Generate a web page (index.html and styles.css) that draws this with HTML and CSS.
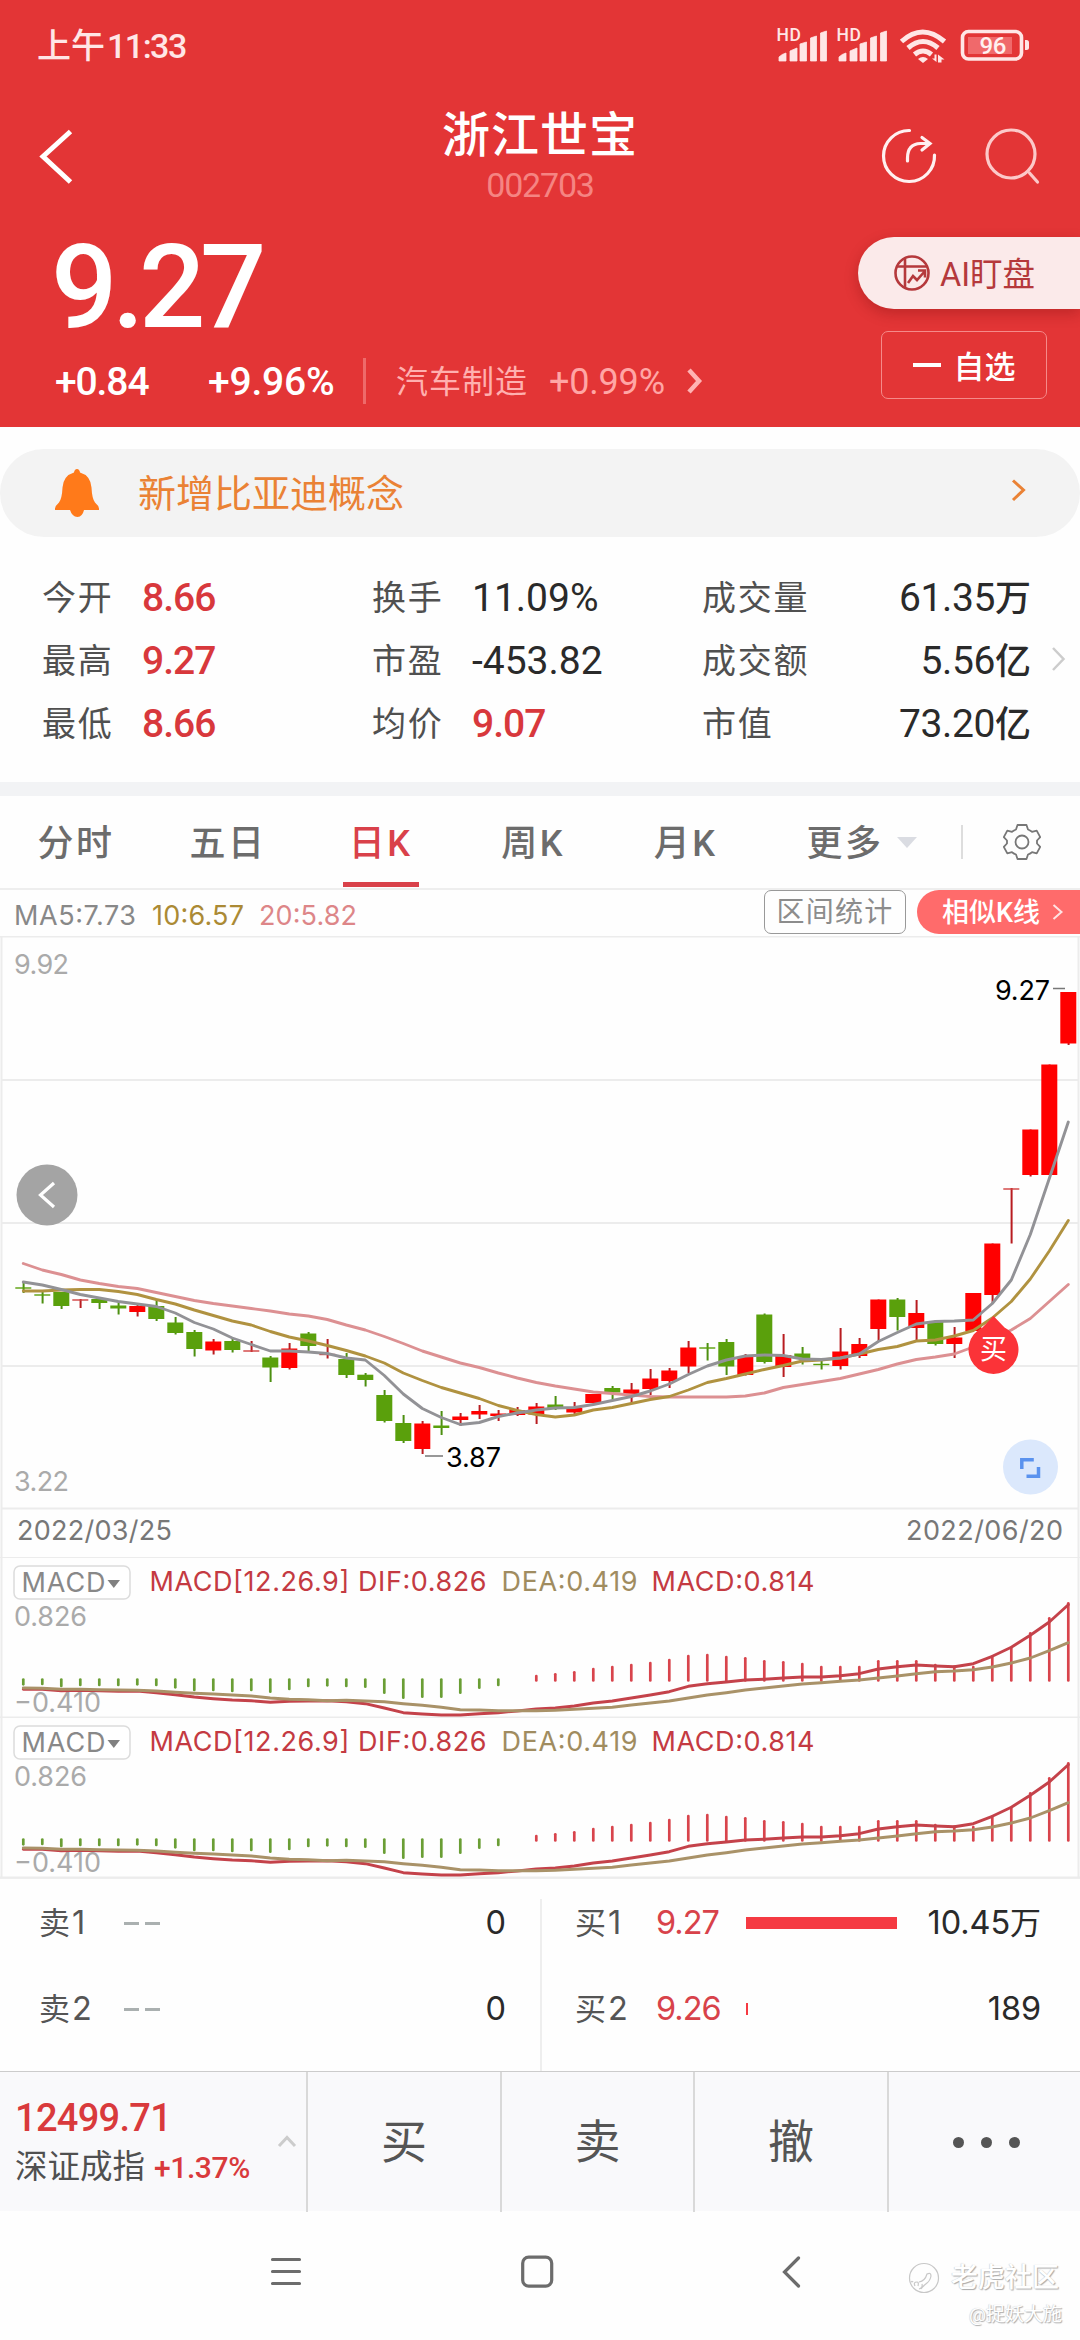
FILE: index.html
```html
<!DOCTYPE html>
<html lang="zh-CN">
<head>
<meta charset="utf-8">
<title>浙江世宝 002703</title>
<link rel="stylesheet" href="styles.css">
</head>
<body>
<header class="header">
  <div class="status">
    <span class="clock">上午<span class="clock-num">11:33</span></span>
    <svg class="status-icons" width="262" height="52" viewBox="770 20 262 52" fill="#ffe6e6">
      <g id="sim">
        <text x="776.500" y="41" class="hd" textLength="24.500">HD</text>
        <path d="M779 61v-4q3-3 7-4v8zM790 61V51l7-3v13zM800 61V44l6.500-2v19zM810.500 61V38l6-2v25zM820.500 61V33l6-2v30z" stroke="#ffe6e6" stroke-width=".8" stroke-linejoin="round"/>
      </g>
      <use href="#sim" x="60"/>
      <g fill="none" stroke="#ffe6e6" stroke-width="5">
        <path d="M901.500 41.500q21-19 43 0"/><path d="M908 48q15-13 30 0"/><path d="M914.500 54.500q8.500-7 17 0"/>
      </g>
      <path d="M918 59q5-4 10 0l-5 4z"/>
      <path d="M932 58.500h2.500v-4h2V62zM938 62.500V54.500l6.500 5h-3v3z"/>
      <rect x="962.500" y="31.500" width="59" height="27.500" rx="6" fill="none" stroke="#ffe6e6" stroke-width="3.600"/>
      <rect x="968" y="37" width="44" height="17" fill="#f0696b"/>
      <path d="M1025 40h1.500q2.500 0 2.500 2.500v5q0 2.500-2.500 2.500h-1.500z"/>
      <text x="979.500" y="54" class="batt" textLength="27">96</text>
    </svg>
  </div>
  <div class="titlebar">
    <svg class="back" width="60" height="60" viewBox="30 126 60 60" fill="none" stroke="#fff" stroke-width="5"><path d="M70.500 131.500 43 156.500l27.500 25.500"/></svg>
    <div class="title-box">
      <h1 class="title">浙江世宝</h1>
      <div class="code">002703</div>
    </div>
    <svg class="actions" width="170" height="60" viewBox="876 126 170 60" fill="none" stroke-width="3.200" stroke-linecap="round">
      <path stroke="#fff0f0" d="M909.500 130.500A25.500 25.500 0 1 0 934.500 155M907.500 161v-3q0-14 13-14.500h9M922 137.500l8 6-8 6.500"/>
      <g stroke="#fcc9c9"><circle cx="1011" cy="154" r="24"/><path d="M1029.500 173l8 9"/></g>
    </svg>
  </div>
  <div class="quote">
    <div class="quote-main">
      <div class="price">9.27</div>
      <div class="quote-row">
        <span class="chg">+0.84</span><span class="pct">+9.96%</span>
        <span class="sector">汽车制造</span><span class="sector-pct">+0.99%</span>
        <svg width="16" height="28" viewBox="0 0 16 28" fill="none" stroke="#ffb3b3" stroke-width="4.500"><path d="M2 3l10 11L2 25"/></svg>
      </div>
    </div>
    <div class="quote-side">
      <div class="ai-pill">
        <svg width="38" height="38" viewBox="892 254 38 38" fill="none" stroke="#b5393c" stroke-width="2.600"><circle cx="911" cy="273" r="16.500"/><path d="M895.500 266.500h31M904 258v30M907 283l5-7 4 4 8-9M917 270.500h7v7"/></svg>
        <span>AI盯盘</span>
      </div>
      <div class="watch"><i class="dash"></i><span>自选</span></div>
    </div>
  </div>
</header>

<section class="notice">
  <svg width="46" height="50" viewBox="54 467 46 50" fill="#ff7a1a"><path d="M77 468q2.500 0 3 3.500 10.500 3 11.500 15 .5 11 3.500 15 3.500 3 4 6v1.500H55V507.500q.5-3 4-6 3-4 3.500-15 1-12 11.500-15 .5-3.500 3-3.500z"/><path d="M70 509q2 6.500 7.500 7 5-.5 6.500-7z"/></svg>
  <span class="notice-text">新增比亚迪概念</span>
  <svg width="16" height="32" viewBox="1011 477 16 32" fill="none" stroke="#ea8235" stroke-width="3"><path d="M1013 480.500l10.500 9.500-10.500 10"/></svg>
</section>

<section class="stats">
  <dl class="stats-grid">
    <div><dt>今开</dt><dd class="up">8.66</dd></div><div><dt>换手</dt><dd>11.09%</dd></div><div class="wide"><dt>成交量</dt><dd>61.35<b>万</b></dd></div>
    <div><dt>最高</dt><dd class="up">9.27</dd></div><div><dt>市盈</dt><dd>-453.82</dd></div><div class="wide"><dt>成交额</dt><dd>5.56<b>亿</b></dd></div>
    <div><dt>最低</dt><dd class="up">8.66</dd></div><div><dt>均价</dt><dd class="up">9.07</dd></div><div class="wide"><dt>市值</dt><dd>73.20<b>亿</b></dd></div>
  </dl>
  <svg width="16" height="28" viewBox="0 0 16 28" fill="none" stroke="#ccc" stroke-width="2.500"><path d="M2 3l10.500 11L2 25"/></svg>
</section>

<nav class="tabs">
  <span>分时</span><span>五日</span><span class="active">日K</span><span>周K</span><span>月K</span>
  <span class="more">更多<i class="tri"></i></span>
  <span class="gear"><svg width="38" height="38" viewBox="-19 -19 38 38" fill="none" stroke="#777" stroke-width="1.800" stroke-linejoin="round"><path d="M-4.500-17h9l1.500 4.500q2 .8 4 2.300l4.700-1.200 3.500 6.500L15-1.500v3l3.200 3.400-3.500 6.500-4.700-1.200q-2 1.500-4 2.300L4.500 17h-9L-6 12.500q-2-.8-4-2.300l-4.700 1.200-3.500-6.500L-15 1.500v-3l-3.200-3.400 3.500-6.500 4.700 1.200q2-1.500 4-2.300z"/><circle r="6.500"/></svg></span>
</nav>

<div class="legend">
  <svg width="400" height="46" viewBox="0 890 400 46" class="ctext">
    <text x="14" y="924.500" fill="#888" textLength="122">MA5:7.73</text>
    <text x="152" y="924.500" fill="#ab8a35" textLength="92">10:6.57</text>
    <text x="259" y="924.500" fill="#dd8688" textLength="98">20:5.82</text>
  </svg>
  <span class="range">区间统计</span>
  <span class="similar"><span>相似K线</span><svg width="12" height="20" viewBox="0 0 12 20" fill="none" stroke="#ffe3e3" stroke-width="2"><path d="M1.500 3l8 7-8 7"/></svg></span>
</div>

<svg class="ctext" id="kline" width="1080" height="622" viewBox="0 936 1080 622">
  <path class="rule" d="M0 936.500H1080M2 1080H1078M2 1223H1078M2 1366H1078M2 1508.500H1078M0 1558H1080M1.500 936V1558M1078.500 936V1558"/>
  <text x="14" y="974" fill="#aaa" textLength="55">9.92</text>
  <text x="14" y="1491" fill="#aaa" textLength="55">3.22</text>
  <g id="candles"></g>
  <g id="averages"></g>
  <path d="M425 1456h18M1053 988.500h12" stroke="#777" stroke-width="1.600"/>
  <text x="446" y="1467" fill="#000" textLength="55">3.87</text>
  <text x="995" y="1000" fill="#000" textLength="55">9.27</text>
  <circle cx="47" cy="1195" r="30.500" fill="#a4a4a4"/>
  <path d="M54 1183l-13.500 12 13.500 12" fill="none" stroke="#fff" stroke-width="3.200"/>
  <circle cx="1030.500" cy="1467" r="27.500" fill="#dbe8fc"/>
  <path d="M1021.800 1469v-9.300h12M1026.500 1476.300h12v-9.300" fill="none" stroke="#5a92ee" stroke-width="3.500"/>
  <path d="M993.500 1316l11 11.500a25 24.500 0 1 1-22 0z" fill="#fb3338"/>
  <text x="993.500" y="1358.500" class="mark">买</text>
  <text x="17" y="1540" fill="#777" textLength="155">2022/03/25</text>
  <text x="906" y="1540" fill="#777" textLength="157">2022/06/20</text>
</svg>

<svg class="ctext macd" width="1080" height="160" viewBox="0 1558 1080 160"></svg>
<svg class="ctext macd" width="1080" height="160" viewBox="0 1558 1080 160"></svg>

<section class="book">
  <div class="book-col">
    <div class="book-row"><span class="lv">卖<em>1</em></span><i class="dd"></i><i class="dd"></i><span class="vol">0</span></div>
    <div class="book-row"><span class="lv">卖<em>2</em></span><i class="dd"></i><i class="dd"></i><span class="vol">0</span></div>
  </div>
  <div class="book-col buy">
    <div class="book-row"><span class="lv">买<em>1</em></span><span class="bp">9.27</span><i class="bar" style="width:151px"></i><span class="vol">10.45<b>万</b></span></div>
    <div class="book-row"><span class="lv">买<em>2</em></span><span class="bp">9.26</span><i class="bar" style="width:2px"></i><span class="vol">189</span></div>
  </div>
</section>

<footer class="toolbar">
  <div class="index">
    <div>
      <div class="idx-val">12499.71</div>
      <div class="idx-row"><span>深证成指</span><span class="idx-pct">+1.37%</span></div>
    </div>
    <svg width="20" height="14" viewBox="0 0 20 14" fill="none" stroke="#ccc" stroke-width="3"><path d="M2 12l8-8.500L18 12"/></svg>
  </div>
  <span>买</span><span>卖</span><span>撤</span><span class="dots"><i></i><i></i><i></i></span>
</footer>

<div class="sysnav">
  <svg width="900" height="40" viewBox="0 2252 900 40" fill="none" stroke="#6c6c6c" stroke-width="3.200" stroke-linecap="round">
    <path d="M272.500 2259.500h27M272.500 2271.500h27M272.500 2283.500h27M798.500 2258l-14 14 14 14"/>
    <rect x="522.700" y="2257.200" width="29" height="29" rx="6"/>
  </svg>
  <div class="mark-box">
    <div class="wm"><svg width="32" height="32" viewBox="-16 -16 32 32" fill="none" stroke="#c8c8c8" stroke-width="1.200"><circle r="14.500"/><path d="M-13 3q1 2 2 0m2 5q-2-4 2-4 2 0 1 4m4-2q1 4-3 5m0-7q6-1 8-8 4-2 4 2-1 5-4 7t-6 6"/></svg><span>老虎社区</span></div>
    <div class="wm-user">@捉妖大施</div>
  </div>
</div>
<script src="chart.js"></script>
</body>
</html>
```
FILE: styles.css
```css
* { box-sizing: border-box; margin: 0; padding: 0; }
body { width: 1080px; height: 2340px; overflow: hidden; background: #fefefe; font-family: Roboto, "Noto Sans CJK SC", sans-serif; color: #2a2a2a; }
svg { display: block; flex: none; }
i, em, b { font-style: normal; font-weight: inherit; }

.header { height: 427px; background: #e33536; color: #fff; }
.status { height: 92px; padding: 0 48px 0 37px; display: flex; justify-content: space-between; align-items: center; color: #ffe6e6; }
.clock { font-size: 34px; font-weight: 500; line-height: 40px; }
.clock-num { letter-spacing: -1.5px; margin-left: 2px; }
.hd { font: 500 17.500px Roboto, sans-serif; }
.batt { font: 500 24px Roboto, sans-serif; fill: #fff0f0; }
.titlebar { height: 116px; display: grid; grid-template-columns: 204px 1fr 204px; padding-top: 13px; }
.back { margin: 21px 0 0 30px; }
.actions { margin-top: 21px; }
.title-box { text-align: center; padding-top: 1px; }
.title { font-size: 48px; font-weight: 500; line-height: 60px; letter-spacing: 1px; }
.code { font-size: 34px; line-height: 36px; margin-top: 1px; letter-spacing: -1.200px; color: #f58482; }
.quote { display: flex; justify-content: space-between; }
.quote-main { padding: 19px 0 0 51px; }
.price { font-size: 117px; font-weight: 500; line-height: 120px; letter-spacing: -5.500px; }
.quote-row { display: flex; align-items: center; height: 44px; margin-top: 12px; font-size: 39px; font-weight: 500; line-height: 44px; padding-left: 4px; }
.chg { width: 153px; letter-spacing: -1.100px; }
.pct { width: 158px; letter-spacing: -.200px; border-right: 3px solid #ee6a6a; }
.sector { font-size: 32px; letter-spacing: 1px; color: #ffb0af; margin-left: 30px; font-weight: 400; }
.sector-pct { font-size: 36px; font-weight: 400; color: #ffa6a5; margin: 0 22px 0 21px; letter-spacing: -.200px; }
.quote-row span { padding-top: 2px; }
.quote-side { padding-top: 29px; display: flex; flex-direction: column; }
.ai-pill { width: 222px; height: 72px; padding-left: 35px; border-radius: 36px 0 0 36px; background: #fbeaea; box-shadow: 0 5px 14px rgba(110, 10, 10, .3); display: flex; align-items: center; gap: 9px; color: #b5393c; font-size: 32.500px; }
.ai-pill span { padding-bottom: 4px; }
.watch { width: 166px; height: 68px; margin: 22px 0 0 23px; border: 1.500px solid #f58a8a; border-radius: 7px; display: flex; align-items: center; justify-content: center; gap: 13px; font-size: 31px; font-weight: 500; }
.watch span { padding-bottom: 2px; }
.dash { width: 28px; height: 4px; background: #fff; }

.notice { height: 88px; margin-top: 22px; border-radius: 44px; background: #f3f3f3; display: flex; align-items: center; padding: 0 53px 0 54px; color: #ea8235; }
.notice-text { flex: 1; margin-left: 38px; font-size: 38px; font-weight: 400; line-height: 50px; padding-top: 2px; }
.stats { height: 259px; padding: 30px 13px 0 42px; border-bottom: 14px solid #f2f3f5; display: flex; }
.stats > svg { margin: 78px 0 0 20px; }
.stats-grid { flex: 1; display: grid; grid-template-columns: 330px 330px 1fr; grid-auto-rows: 63px; line-height: 63px; }
.stats-grid div { display: flex; }
.stats dt { width: 100px; font-size: 34px; letter-spacing: 1.800px; color: #505050; white-space: nowrap; }
.stats dd { font-size: 39px; font-weight: 450; letter-spacing: 0; }
.stats dd.up { font-weight: 500; letter-spacing: -1px; }
.stats dd b { font-size: 36px; letter-spacing: 0; }
.stats .wide { justify-content: space-between; }
.stats .wide dd { letter-spacing: -.400px; }
.up { color: #d8383c; }

.tabs { height: 92px; display: grid; grid-template-columns: 152px 152px 153px 152px 153px 199px 1fr; line-height: 96px; text-align: center; font-size: 36px; letter-spacing: 2.500px; font-weight: 500; color: #6c6c6c; }
.tabs span { height: 92px; }
.tabs .active { color: #d9414a; background: linear-gradient(#d9414a, #d9414a) center bottom 1px / 76px 5px no-repeat; }
.tabs .more { display: flex; justify-content: center; align-items: flex-start; gap: 13px; }
.tri { margin-top: 41px; border: 10.500px solid transparent; border-top: 11px solid #dadce2; border-bottom: 0; }
.gear { display: flex; align-items: center; padding-left: 42px; background: linear-gradient(#ddd, #ddd) left center / 2px 34px no-repeat; }
.legend { height: 48px; border-top: 2px solid #eee; display: flex; align-items: flex-start; }
.range { margin: 0 11px 0 364px; width: 142px; height: 44px; border: 1.500px solid #999; border-radius: 7px; font-size: 28px; line-height: 44px; text-align: center; letter-spacing: 1.200px; color: #8c8c8c; }
.similar { flex: 1; height: 44px; padding-left: 25px; border-radius: 22px 0 0 22px; background: #ff6b6b; color: #fff; font-size: 27px; font-weight: 500; line-height: 44px; display: flex; align-items: center; gap: 12px; }
.similar span { padding-top: 2px; }
.ctext text { font-family: Inter, Roboto, sans-serif; font-size: 27px; }
.ctext text.mark { font: 27px "Noto Sans CJK SC", sans-serif; fill: #fff; text-anchor: middle; }
.rule { stroke: #ececec; stroke-width: 2; fill: none; }
.ma { fill: none; stroke-linejoin: round; stroke-linecap: round; }

.book { height: 193px; display: flex; border-top: 1px solid #eee; }
.book-col { flex: 1; padding-top: 1px; }
.book-row { height: 86px; display: flex; align-items: center; padding: 0 34px 0 39px; font-family: Inter, "Noto Sans CJK SC", sans-serif; font-size: 32.500px; line-height: 44px; }
.buy { background: linear-gradient(#eee, #eee) left 20px / 2px 100% no-repeat; }
.buy .book-row { padding: 0 39px 0 35px; }
.lv { width: 85px; font-size: 31px; color: #555; white-space: nowrap; }
.lv em { font-size: 32.500px; margin-left: 2px; }
.buy .lv { width: 81px; }
.dd { width: 15px; height: 3px; margin-right: 6px; background: #aab0b0; }
.bp { width: 90px; color: #d8424a; letter-spacing: -1px; }
.bar { height: 11.500px; background: #f53a42; }
.vol { margin-left: auto; letter-spacing: -.1px; }
.vol b { font-size: 31px; }

.toolbar { height: 140px; border-top: 1.500px solid #ccc; background: #f9f9fb; display: grid; grid-template-columns: 306px 194px 193px 194px 1fr; }
.toolbar > span { border-left: 2px solid #d9d9d9; font-size: 46px; color: #555; line-height: 140px; text-align: center; }
.index { display: flex; align-items: center; justify-content: space-between; padding: 2px 9px 0 15px; }
.idx-val { font-size: 38px; font-weight: 500; letter-spacing: -.700px; line-height: 48px; color: #d93a3c; }
.idx-row { font-size: 32.500px; line-height: 50px; color: #505050; white-space: nowrap; }
.idx-pct { font-size: 30px; font-weight: 500; color: #d93a3c; margin-left: 9px; letter-spacing: -.400px; }
.index > svg { margin-bottom: 4px; }
.toolbar .dots { display: flex; align-items: center; justify-content: center; gap: 17px; padding-left: 4px; }
.dots i { width: 11px; height: 11px; border-radius: 50%; background: #555; }

.sysnav { height: 129px; display: flex; padding-top: 41px; }
.mark-box { width: 162px; padding-top: 8px; color: #fff; text-shadow: 1px 1px 1px #aaa, -.5px -.5px 1px #ccc; }
.wm { display: flex; align-items: center; gap: 11px; margin-left: 8px; font-size: 27px; font-weight: 500; line-height: 36px; white-space: nowrap; }
.wm-user { margin-top: 7px; text-align: right; font-size: 19px; line-height: 24px; }
```
FILE: chart.js
```js
// Candles: [up, body top, body bottom, wick top, wick bottom]
const candles = [
[0,1287,1289,1281,1293],[0,1294,1296,1292,1303.5],[0,1292,1306,1292,1309],[1,1299,1301,1299,1308],[0,1299,1303,1299,1309],
[0,1305.5,1308.5,1303,1314.5],[1,1306,1312,1305,1316.5],[0,1306,1319,1300,1321],[0,1322.5,1333,1317,1334.5],[0,1332,1349,1330,1356.5],
[1,1341.5,1350.5,1339,1354.5],[0,1341,1350,1338,1352.5],[1,1350,1352,1341,1352],[0,1357.5,1367.5,1356,1382],[1,1348.5,1368,1343,1369.5],
[0,1333.5,1346,1332,1352],[1,1353.5,1355.5,1339,1358.5],[0,1359,1375,1353,1378],[0,1374.7,1380,1373,1386.5],[0,1395,1421,1390,1422.5],
[0,1423,1441,1415,1443],[1,1423.5,1449,1421,1454],[0,1425.5,1428,1411,1435],[1,1416.5,1420,1413,1426],[1,1411,1414.5,1405,1419],
[1,1413.5,1416,1410,1421],[1,1410,1415,1407,1416],[1,1406.5,1414.5,1403,1424],[0,1404.5,1408,1396,1410],[1,1408,1412.5,1402,1414],
[1,1394,1403,1394,1405],[0,1388,1392.5,1386,1399],[1,1389.5,1395,1383,1403],[1,1378.5,1389,1369,1395],[1,1370.5,1381,1368,1388],
[1,1347.5,1366.5,1341,1373],[0,1347,1349,1343,1360.5],[0,1342,1366.5,1339,1375],[1,1357,1375,1354,1375.5],[0,1314.5,1362,1313.5,1363.5],
[1,1355,1367,1334,1377],[0,1353.5,1358,1347,1364.5],[0,1363.5,1365.5,1360,1369.5],[1,1351.5,1366,1328,1369.5],[1,1344,1356,1338,1358],
[1,1299.5,1329,1299.5,1342],[0,1299.5,1317,1298,1330.5],[1,1313,1328,1300,1340],[0,1322,1344,1320.5,1345.5],[1,1337.5,1344,1327,1358],
[1,1293,1331,1293,1331],[1,1243.5,1295,1243.5,1303.5],[1,1188,1190,1188,1243.5],[1,1129.5,1175,1129.5,1176.5],[1,1064.5,1175,1064.5,1175],[1,992,1043.5,992,1045]];
const ma20 = [1263.5,1270,1274.5,1280,1283.5,1286.5,1288.5,1292.5,1296.5,1300.5,1303.5,1306,1308.5,1311,1314,1316,1319.5,1325,1330,1336.5,1343.5,1351,1357,1363,1367.5,1373,1378,1382.5,1386,1389,1392,1393.5,1395,1396.5,1397,1397,1397,1397,1396,1393,1387.5,1384.5,1381.5,1378.5,1374,1369.5,1364,1359.5,1357,1354,1347,1339,1330,1318.5,1301.5,1284.5];
const ma10 = [1291,1291,1290,1289.5,1289.5,1291.5,1294.5,1299.5,1304,1310,1315.5,1321,1325,1331.5,1337,1341,1345.5,1350.5,1356,1363,1373,1380.5,1387.5,1393,1398.5,1405.5,1410.5,1414.5,1417,1415,1410,1407.5,1403.5,1399.5,1396.5,1390,1382.5,1378.5,1374,1369.5,1365.5,1361,1360,1358,1354,1349.5,1346.5,1341,1340,1336,1330.5,1318,1301.5,1279,1251,1220.5];
const ma5 = [1282,1285,1289.5,1294.5,1298,1301.5,1304,1306.5,1313,1322.5,1329,1338,1344.5,1351,1351,1352,1353.5,1358,1360,1375.5,1394,1408.5,1417.5,1424.5,1422.5,1416.5,1413,1410,1408,1407.5,1404.5,1400.5,1396.5,1391,1384,1374.5,1366,1360,1356,1355,1355.5,1359,1359.5,1358,1354,1341.5,1332.5,1324,1321.5,1321,1320,1303.5,1280,1234.5,1178.5,1122];
// MACD series, in thirds of a pixel below y = 1500
const hist = [553,552,558,555,555,555,553,555,562,570,570,573,570,575,567,558,556,558,560,578,593,590,590,578,563,555,null,528,523,517,507,501,495,489,480,468,465,471,475,484,487,492,501,501,501,484,484,484,495,500,501,469,443,400,355,310];
const dif = [568,568,572,571,572,574,573,578,584,591,596,600,602,607,604,603,602,605,611,624,638,642,645,645,641,638,633,627,624,618,609,603,594,585,575,559,551,546,540,538,534,531,531,527,521,507,500,495,498,500,491,469,442,406,366,314];
const dea = [564,565,568,568,569,570,571,573,577,580,582,585,588,594,598,599,602,601,603,605,611,616,622,629,630,632,632,632,631,628,625,622,615,609,603,594,585,578,570,564,558,552,548,544,540,534,528,521,515,513,509,501,489,474,452,428];

const px = i => 23.3 + 19 * i;
const line = (data, color) =>
  `<polyline class="ma" stroke-width="2.9" stroke="${color}" points="${data.map((y, i) => px(i) + ',' + y).join(' ')}"/>`;

document.getElementById('candles').innerHTML = candles.map(([up, t, b, wt, wb], i) => {
  const x = px(i), thin = b - t <= 2;
  return `<path d="M${x + .3} ${wt}V${wb}" stroke="${up ? '#b81c20' : '#4c8f10'}" stroke-width="2"/>` +
    `<rect x="${x - 8}" y="${thin ? t + .3 : t}" width="16" height="${thin ? 1.4 : b - t}" fill="${up ? (thin ? '#d04040' : '#ff0000') : '#5aa00c'}"/>`;
}).join('');
document.getElementById('averages').innerHTML =
  line(ma20, '#dc9092') + line(ma10, '#b09240') + line(ma5, '#929296');

const y = v => +(1500 + v / 3).toFixed(1);
document.querySelectorAll('.macd').forEach(svg => {
  const bars = hist.map((v, i) => v === null ? '' :
    `<path d="M${px(i)} ${v > 545 ? 1679.5 : 1680.5}V${y(v)}" stroke="${v > 545 ? '#6a9e35' : '#d8444c'}" stroke-width="2.700" stroke-linecap="round"/>`).join('');
  svg.innerHTML = `<path class="rule" d="M0 1717.500H1080M1.500 1558V1718M1078.500 1558V1718"/>
    <rect x="14" y="1566" width="116" height="33" rx="6" fill="#fff" stroke="#dcdcdc" stroke-width="1.500"/>
    <text x="21.500" y="1592" fill="#888" textLength="84">MACD</text>
    <path d="M107.500 1580h12.500l-6.200 8z" fill="#808080"/>
    <text x="149.500" y="1591" fill="#c43a42" textLength="337">MACD[12.26.9] DIF:0.826</text>
    <text x="501.500" y="1591" fill="#a08c60" textLength="136">DEA:0.419</text>
    <text x="651.500" y="1591" fill="#c43a42" textLength="163">MACD:0.814</text>
    <text x="14" y="1626" fill="#aaa" textLength="73">0.826</text>
    <text x="14" y="1712" fill="#aaa" textLength="87">−0.410</text>
    ${bars}${line(dif.map(y), '#c4424a')}${line(dea.map(y), '#a99268')}`;
});
```
